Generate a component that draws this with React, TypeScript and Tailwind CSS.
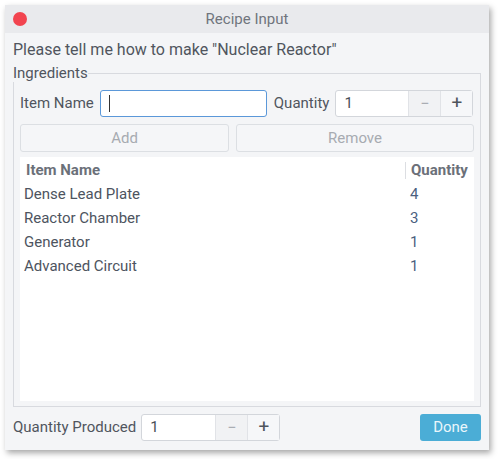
import React from "react";

const rows = [
  { name: "Dense Lead Plate", qty: 4 },
  { name: "Reactor Chamber", qty: 3 },
  { name: "Generator", qty: 1 },
  { name: "Advanced Circuit", qty: 1 },
];

function Spinner({ value, inputW, btnW }: { value: string; inputW: string; btnW: string }) {
  return (
    <div className="flex shrink-0 h-[27px] rounded-[3px] border border-[#d3d6db] bg-white">
      <div className={`${inputW} flex items-center pl-[8px] text-[15px] text-[#4a4f58]`}>{value}</div>
      <button className={`${btnW} flex items-center justify-center border-l border-[#e1e3e7] bg-[#f1f2f4] text-[#a9adb3] text-[16px]`}>
        −
      </button>
      <button className={`${btnW} flex items-center justify-center border-l border-[#e1e3e7] bg-[#f6f7f9] text-[#4f545c] text-[19px]`}>
        +
      </button>
    </div>
  );
}

export default function App() {
  return (
    <div className="w-[498px] h-[459px] bg-white pt-[5px] pl-[5px]" style={{ fontFamily: "Roboto, 'Noto Sans', sans-serif" }}>
      <div className="w-[484px] h-[445px] bg-[#f4f5f7] flex flex-col shadow-[2px_3px_6px_rgba(0,0,0,0.35)]">
        <div className="h-[28px] bg-[#e9eaed] grid grid-cols-[1fr_auto_1fr] items-center">
          <div className="pl-[8px] flex">
            <div className="w-[14px] h-[14px] rounded-full bg-[#f2444f]" />
          </div>
          <div className="text-[15px] text-[#70757d]">Recipe Input</div>
          <div />
        </div>
        <div className="flex-1 flex flex-col px-[8px] pt-[6px] pb-[9px]">
          <div className="text-[16px] leading-[22px] text-[#50555e]">Please tell me how to make "Nuclear Reactor"</div>
          <fieldset className="mt-[3px] border border-[#d8dadf] px-[6px] pb-[5px] flex-1 flex flex-col">
            <legend className="p-0 text-[15px] leading-[18px] text-[#50555e] -ml-[7px]">Ingredients</legend>
            <div className="flex items-center mt-[8px] h-[27px] whitespace-nowrap">
              <span className="text-[15px] text-[#50555e] mr-[6px]">Item Name</span>
              <div className="w-[167px] shrink-0 h-[27px] rounded-[3px] border border-[#5b98d9] bg-white flex items-center pl-[8px]">
                <div className="w-px h-[17px] bg-[#333]" />
              </div>
              <span className="text-[15px] text-[#50555e] ml-[7px] mr-[6px]">Quantity</span>
              <Spinner value="1" inputW="w-[72px]" btnW="w-[32px]" />
            </div>
            <div className="flex gap-[7px] mt-[7px]">
              <button className="w-[209px] h-[28px] rounded-[3px] border border-[#dcdfe3] bg-[#f5f6f8] text-[15px] text-[#a7abb1]">Add</button>
              <button className="flex-1 h-[28px] rounded-[3px] border border-[#dcdfe3] bg-[#f5f6f8] text-[15px] text-[#a7abb1]">Remove</button>
            </div>
            <div className="mt-[5px] flex-1 bg-white pt-[4px]">
              <div className="flex items-center h-[18px] text-[15px] font-bold text-[#6b7079]">
                <div className="flex-1 pl-[6px]">Item Name</div>
                <div className="w-[69px] h-[17px] border-l border-[#dcdee2] pl-[5px] leading-[17px]">Quantity</div>
              </div>
              <div className="mt-[3px]">
                {rows.map((r) => (
                  <div key={r.name} className="flex items-center h-[24px] text-[15px] text-[#4d5460]">
                    <div className="flex-1 pl-[4px]">{r.name}</div>
                    <div className="w-[69px] pl-[5px] text-[#4b5f80]">{r.qty}</div>
                  </div>
                ))}
              </div>
            </div>
          </fieldset>
          <div className="flex items-center h-[27px] mt-[7px] whitespace-nowrap">
            <span className="text-[15px] text-[#50555e] mr-[5px]">Quantity Produced</span>
            <Spinner value="1" inputW="w-[73px]" btnW="w-[32px]" />
            <div className="flex-1" />
            <button className="w-[61px] h-[27px] rounded-[3px] bg-[#4badd6] text-[15px] text-[#eaf6fb]">Done</button>
          </div>
        </div>
      </div>
    </div>
  );
}
